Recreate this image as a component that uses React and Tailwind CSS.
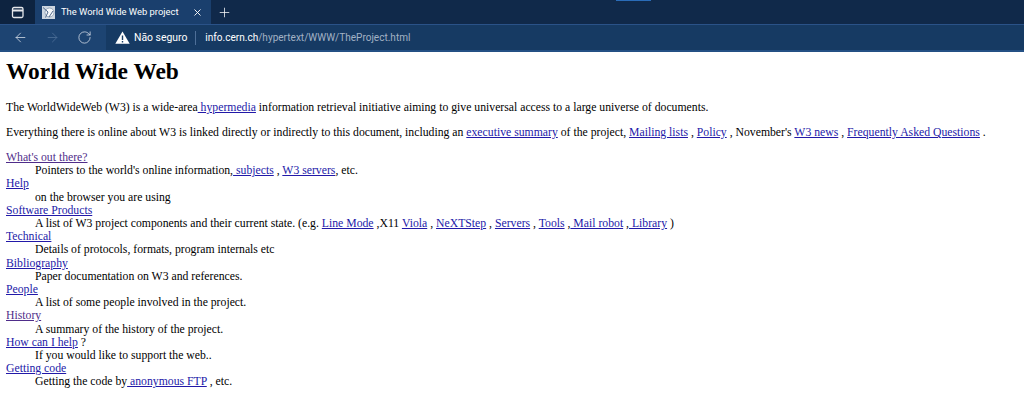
import { ArrowLeft, ArrowRight, RotateCw, X, Plus } from "lucide-react";

const A = ({ visited, children }) => (
  <a href="#" className={`underline ${visited ? "text-[#4f2d8a]" : "text-[#2219a8]"}`}>
    {children}
  </a>
);

const Entry = ({ term, children }) => (
  <>
    <dt>{term}</dt>
    <dd className="pl-[29px]">{children}</dd>
  </>
);

const Browser = () => (
  <header className="font-['Roboto',sans-serif] text-white">
    <div className="relative flex h-[24px] items-end bg-[#10294a]">
      <div className="absolute left-[616px] top-0 h-px w-[35px] bg-[#2a6cb8]" />
      <div className="flex h-full w-[35px] items-center justify-center bg-[#0d2340]">
        <svg width="14" height="13" viewBox="0 0 14 13" fill="none" stroke="#e5e7eb" strokeWidth="1.3">
          <rect x="1.5" y="1.5" width="10.5" height="10" rx="1.5" />
          <path d="M1.5 4.5h10.5" strokeWidth="2" />
        </svg>
      </div>
      <div className="flex h-full w-[176px] items-center bg-[#1a3f6d] pl-[7px] pr-[8px]">
        <svg width="13" height="13" viewBox="0 0 13 13" className="shrink-0">
          <rect width="13" height="13" fill="#cdd6e0" />
          <circle cx="7.5" cy="6.5" r="4.5" fill="#f6f8fa" stroke="#8397ad" strokeWidth="0.8" />
          <path d="M1 1.5l5 4.5-2.5 5.5M7 11l4-6" fill="none" stroke="#50688a" strokeWidth="1" />
        </svg>
        <span className="ml-[6px] whitespace-nowrap text-[9.4px]">The World Wide Web project</span>
        <X className="ml-auto shrink-0" size={11} strokeWidth={2} />
      </div>
      <div className="flex h-full w-[26px] items-center justify-center">
        <Plus size={15} strokeWidth={1.2} />
      </div>
    </div>
    <div className="flex h-[28px] items-center border-t border-[#2a5288] border-b-2 border-b-[#245084] bg-[#1d4472]">
      <div className="flex w-[106px] items-center pl-[13px]">
        <ArrowLeft size={15} strokeWidth={1.3} className="text-[#cfd8e4]" />
        <ArrowRight size={15} strokeWidth={1.3} className="ml-[17px] text-[#4e6f98]" />
        <RotateCw size={15} strokeWidth={1.3} className="ml-[17px] text-[#cfd8e4]" />
      </div>
      <div className="flex h-full flex-1 items-center bg-[#163a63] pl-[9px]">
        <svg width="15" height="13" viewBox="0 0 15 13">
          <path d="M7.5 0.5L14.7 12.8H0.3Z" fill="#fff" />
          <path d="M6.8 4.5h1.4v4.6H6.8zM6.8 10h1.4v1.4H6.8z" fill="#163a63" />
        </svg>
        <span className="ml-[4px] text-[10.4px]">Não seguro</span>
        <span className="ml-[8px] mr-[9px] h-[14px] w-px bg-[#4e6f98]" />
        <span className="text-[10.05px]">info.cern.ch</span>
        <span className="text-[10.05px] text-[#a2b2c5]">/hypertext/WWW/TheProject.html</span>
      </div>
    </div>
  </header>
);

export default function App() {
  return (
    <div className="min-h-screen bg-white">
      <Browser />
      <main className="px-[6px] pt-[6px] font-['Liberation_Serif',serif] text-[11.72px] leading-[13.2px] text-black">
        <h1 className="text-[23.4px] leading-[27px] font-bold">World Wide Web</h1>
        <p className="mt-[16px]">
          The WorldWideWeb (W3) is a wide-area<A> hypermedia</A> information retrieval initiative aiming to give universal access to a large universe of documents.
        </p>
        <p className="mt-[12px]">
          Everything there is online about W3 is linked directly or indirectly to this document, including an <A>executive summary</A> of the project, <A>Mailing lists</A> , <A>Policy</A> , November's <A>W3 news</A> , <A>Frequently Asked Questions</A> .
        </p>
        <dl className="mt-[11.6px]">
          <Entry term={<A visited>What's out there?</A>}>
            Pointers to the world's online information,<A> subjects</A> , <A>W3 servers</A>, etc.
          </Entry>
          <Entry term={<A>Help</A>}>on the browser you are using</Entry>
          <Entry term={<A>Software Products</A>}>
            A list of W3 project components and their current state. (e.g. <A>Line Mode</A> ,X11 <A>Viola</A> , <A>NeXTStep</A> , <A>Servers</A> , <A>Tools</A> ,<A> Mail robot</A> ,<A> Library</A> )
          </Entry>
          <Entry term={<A>Technical</A>}>Details of protocols, formats, program internals etc</Entry>
          <Entry term={<A>Bibliography</A>}>Paper documentation on W3 and references.</Entry>
          <Entry term={<A>People</A>}>A list of some people involved in the project.</Entry>
          <Entry term={<A visited>History</A>}>A summary of the history of the project.</Entry>
          <Entry term={<><A>How can I help</A> ?</>}>If you would like to support the web..</Entry>
          <Entry term={<A>Getting code</A>}>
            Getting the code by<A> anonymous FTP</A> , etc.
          </Entry>
        </dl>
      </main>
    </div>
  );
}
